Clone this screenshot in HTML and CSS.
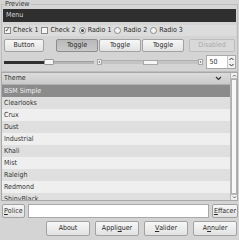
FILE: index.html
```html
<!DOCTYPE html>
<html>
<head>
<meta charset="utf-8">
<link rel="stylesheet" href="styles.css">
</head>
<body>
<fieldset class="preview">
  <legend class="legend">Preview</legend>
  <div class="menubar">Menu</div>
  <div class="checkrow">
    <span class="opt"><span class="box checked">✓</span>Check 1</span>
    <span class="opt"><span class="box"></span>Check 2</span>
    <span class="opt"><span class="radio on"></span>Radio 1</span>
    <span class="opt"><span class="radio"></span>Radio 2</span>
    <span class="opt"><span class="radio"></span>Radio 3</span>
  </div>
  <div class="btnrow">
    <span class="btn w40">Button</span>
    <span class="gap"></span>
    <span class="btn w42 pressed">Toggle</span>
    <span class="btn w42">Toggle</span>
    <span class="btn w42">Toggle</span>
    <span class="btn w46 disabled">Disabled</span>
  </div>
  <div class="sliderrow">
    <div class="slider">
      <div class="fill"></div>
      <div class="handle"></div>
      <div class="rest"></div>
    </div>
    <div class="hscroll">
      <div class="arrow">
        <svg width="5" height="5" viewBox="0 0 5 5"><path d="M3.5 1 L1.5 2.5 L3.5 4" fill="none" stroke="#444" stroke-width="1"/></svg>
      </div>
      <div class="htrack"><div class="hthumb"></div></div>
      <div class="arrow">
        <svg width="5" height="5" viewBox="0 0 5 5"><path d="M1.5 1 L3.5 2.5 L1.5 4" fill="none" stroke="#444" stroke-width="1"/></svg>
      </div>
    </div>
    <div class="spin">
      <div class="spinval">50</div>
      <div class="spinbtns">
        <svg width="7" height="6" viewBox="0 0 7 6"><path d="M1.5 4 L3.5 2 L5.5 4" fill="none" stroke="#333" stroke-width="1"/></svg>
        <svg width="7" height="6" viewBox="0 0 7 6"><path d="M1.5 2 L3.5 4 L5.5 2" fill="none" stroke="#333" stroke-width="1"/></svg>
      </div>
    </div>
  </div>
</fieldset>

<div class="list">
  <div class="listmain">
    <div class="listhead">
      <span>Theme</span>
      <svg width="7" height="5" viewBox="0 0 7 5"><path d="M1 1 L3.5 3.5 L6 1" fill="none" stroke="#333" stroke-width="1.2"/></svg>
    </div>
    <div class="rows">
      <div class="row sel">BSM Simple</div>
      <div class="row odd">Clearlooks</div>
      <div class="row">Crux</div>
      <div class="row odd">Dust</div>
      <div class="row">Industrial</div>
      <div class="row odd">Khali</div>
      <div class="row">Mist</div>
      <div class="row odd">Raleigh</div>
      <div class="row">Redmond</div>
      <div class="row odd">ShinyBlack</div>
    </div>
  </div>
  <div class="vscroll">
    <div class="varrow">
      <svg width="5" height="5" viewBox="0 0 5 5"><path d="M1 3.5 L2.5 2 L4 3.5" fill="none" stroke="#555" stroke-width="0.9"/></svg>
    </div>
    <div class="vthumb"></div>
    <div class="varrow">
      <svg width="5" height="5" viewBox="0 0 5 5"><path d="M1 1.5 L2.5 3 L4 1.5" fill="none" stroke="#555" stroke-width="0.9"/></svg>
    </div>
  </div>
</div>

<div class="fontrow">
  <span class="btn small"><u>P</u>olice</span>
  <div class="field"></div>
  <span class="btn small"><u>E</u>ffacer</span>
</div>

<div class="bottomrow">
  <span class="btn bw">About</span>
  <span class="btn bw">Appli<u>q</u>uer</span>
  <span class="btn bw"><u>V</u>alider</span>
  <span class="btn bw">A<u>n</u>nuler</span>
</div>
</body>
</html>
```
FILE: styles.css
```css
* { box-sizing: border-box; }
html, body { margin: 0; padding: 0; }
body {
  width: 239px;
  height: 240px;
  overflow: hidden;
  background: #d4d4d4;
  font-family: "DejaVu Sans Condensed", "DejaVu Sans", sans-serif;
  font-stretch: condensed;
  font-size: 7px;
  line-height: 9px;
  color: #2a2a2a;
}
.preview {
  margin: 0 1px;
  padding: 0 1px 1px 1px;
  border: 1px solid #bdbdbd;
  min-width: 0;
  height: 72px;
}
.legend {
  padding: 0 1px;
  margin-left: 1px;
  color: #333;
  line-height: 9px;
}
.menubar {
  height: 13px;
  background: #2f2f2f;
  color: #d6d6d6;
  padding: 2px 3px;
  line-height: 9px;
}
.checkrow {
  margin-top: 3px;
  height: 11px;
  background: #dcdcdc;
  display: flex;
  align-items: center;
  padding-left: 1px;
  gap: 3px;
}
.opt { display: flex; align-items: center; gap: 2px; white-space: nowrap; }
.box {
  width: 7px; height: 7px;
  border: 1px solid #8a8a8a;
  background: #f4f4f4;
  font-size: 7px; line-height: 5px;
  display: flex; align-items: center; justify-content: center;
  color: #333;
}
.radio {
  width: 7px; height: 7px;
  border: 1px solid #8a8a8a;
  border-radius: 50%;
  background: #f4f4f4;
  display: flex; align-items: center; justify-content: center;
}
.radio.on::after {
  content: "";
  width: 3px; height: 3px; border-radius: 50%;
  background: #444;
}
.btnrow {
  margin-top: 3px;
  display: flex;
  padding-left: 1px;
  gap: 1px;
}
.gap { width: 10px; }
.btn {
  display: inline-flex;
  align-items: center;
  justify-content: center;
  height: 13px;
  border: 1px solid #a2a2a2;
  border-radius: 2px;
  background: linear-gradient(#f7f7f7, #e2e2e2);
  color: #2a2a2a;
  white-space: nowrap;
}
.w40 { width: 40px; }
.w42 { width: 42px; }
.w46 { width: 46px; margin-left: 4px; }
.btn.pressed {
  background: linear-gradient(#b9b9b9, #c9c9c9);
  border-color: #8e8e8e;
}
.btn.disabled {
  background: #d9d9d9;
  border-color: #bdbdbd;
  color: #ababab;
}
.sliderrow {
  margin-top: 3px;
  display: flex;
  align-items: center;
  height: 14px;
}
.slider {
  width: 91px;
  margin-left: 1px;
  display: flex;
  align-items: center;
}
.fill { width: 40px; height: 3px; background: #2f2f2f; }
.handle {
  width: 10px; height: 6px;
  background: #f6f6f6;
  border: 1px solid #9a9a9a;
  border-radius: 1px;
}
.rest { flex: 1; height: 3px; background: #b5b5b5; border-top: 1px solid #a0a0a0; }
.hscroll {
  width: 108px;
  margin-left: 3px;
  height: 6px;
  display: flex;
  align-items: center;
}
.arrow {
  width: 5px; height: 6px;
  border: 1px solid #a8a8a8;
  background: #f2f2f2;
  display: flex; align-items: center; justify-content: center;
}
.arrow svg { width: 4px; height: 4px; }
.htrack {
  flex: 1;
  height: 4px;
  background: #c4c4c4;
  border-top: 1px solid #b0b0b0;
  display: flex;
}
.hthumb {
  margin-left: 41px;
  width: 15px;
  height: 5px;
  margin-top: -1px;
  background: #f6f6f6;
  border: 1px solid #a8a8a8;
}
.spin {
  margin-left: 3px;
  width: 30px;
  height: 14px;
  display: flex;
  border: 1px solid #a8a8a8;
  background: #fff;
}
.spinval { flex: 1; padding-left: 2px; line-height: 12px; color: #333; }
.spinbtns {
  width: 8px;
  display: flex;
  flex-direction: column;
  justify-content: space-between;
  align-items: center;
  background: #f0f0f0;
  border-left: 1px solid #c8c8c8;
}
.list {
  margin: 0 1px;
  height: 129px;
  display: flex;
  border: 1px solid #a8a8a8;
  background: #efefef;
}
.listmain { flex: 1; overflow: hidden; }
.listhead {
  height: 12px;
  background: linear-gradient(#dcdcdc, #cacaca);
  border-bottom: 1px solid #b0b0b0;
  display: flex;
  align-items: center;
  justify-content: space-between;
  padding: 0 8px 0 2px;
  color: #333;
}
.row {
  height: 12px;
  padding-left: 2px;
  line-height: 12px;
  background: #efefef;
  color: #333;
}
.row.odd { background: #dfdfdf; }
.row.sel { background: #8b8b8b; color: #ececec; }
.vscroll {
  width: 7px;
  display: flex;
  flex-direction: column;
  background: #d8d8d8;
  border-left: 1px solid #b8b8b8;
}
.varrow {
  height: 6px;
  background: #f0f0f0;
  border-bottom: 1px solid #bbb;
  display: flex; align-items: center; justify-content: center;
}
.varrow:last-child { border-bottom: none; border-top: 1px solid #bbb; }
.vthumb {
  flex: 1;
  background: #f8f8f8;
  border: 1px solid #b0b0b0;
}
.fontrow {
  margin-top: 3px;
  display: flex;
  align-items: center;
  padding: 0 1px 0 2px;
  gap: 3px;
}
.btn.small { padding: 0 1px; height: 14px; }
.field {
  flex: 1;
  height: 14px;
  background: #fff;
  border: 1px solid #a8a8a8;
}
.bottomrow {
  margin-top: 3px;
  display: flex;
  justify-content: flex-end;
  gap: 5px;
  padding-right: 2px;
}
.btn.bw { width: 44px; height: 15px; }
u { text-decoration: underline; }
```
